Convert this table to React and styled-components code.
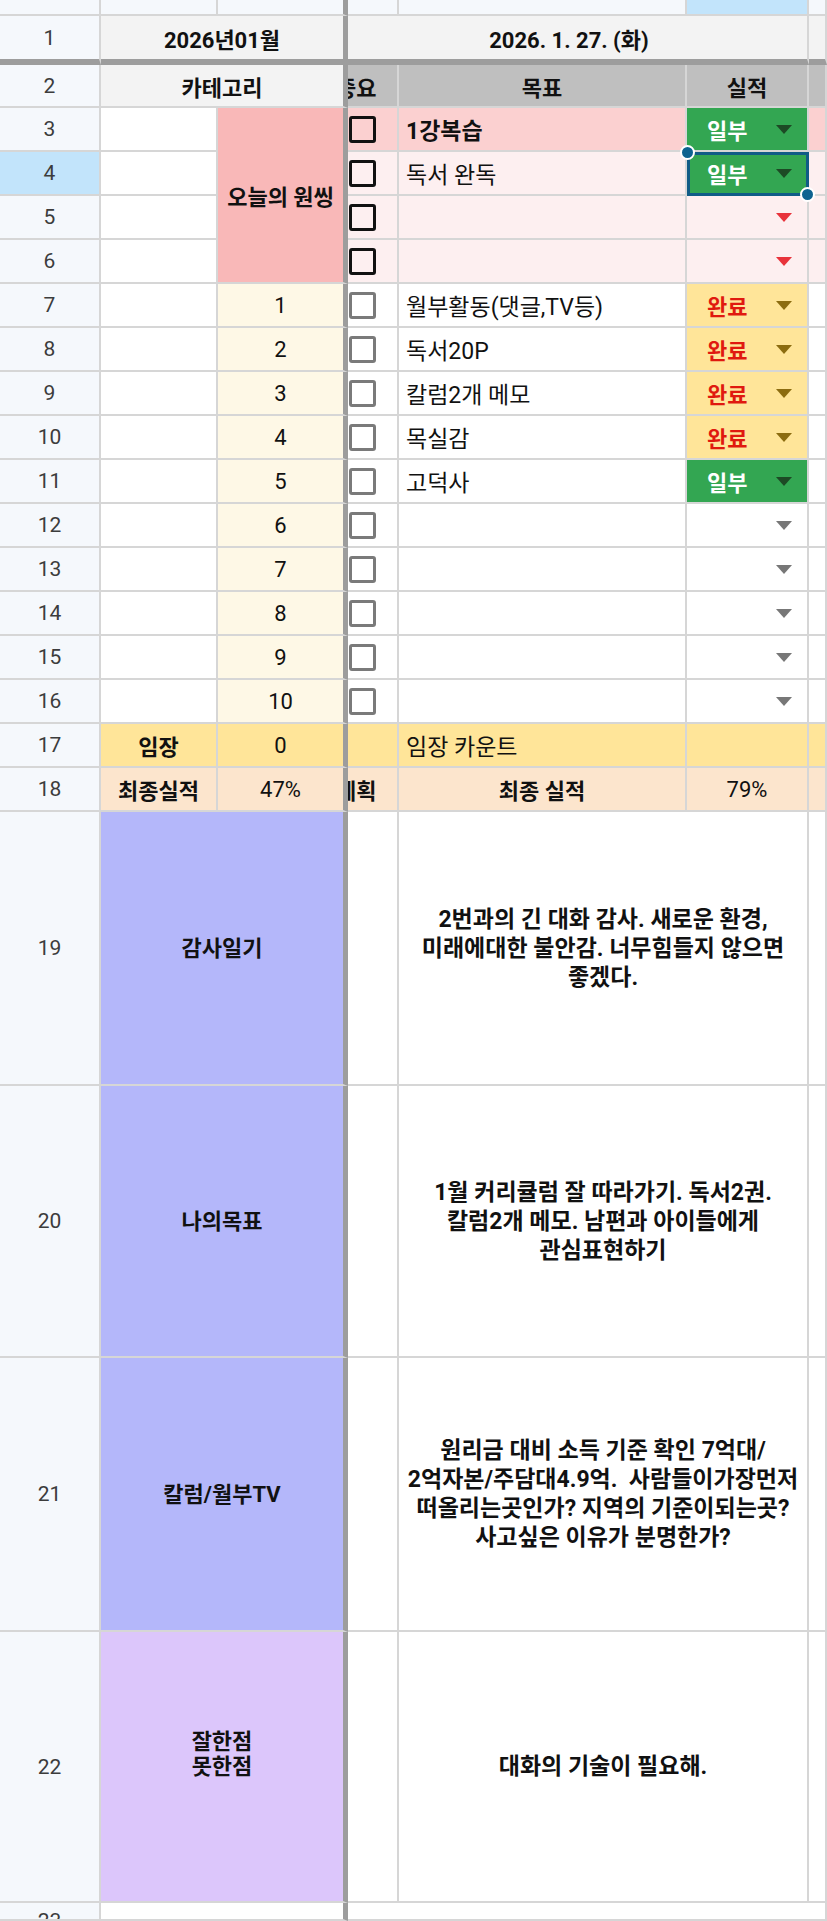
import styled, { createGlobalStyle } from 'styled-components';

const GlobalStyle = createGlobalStyle`
  body {
    margin: 0;
    background: #fff;
  }
  * {
    box-sizing: border-box;
  }
`;

//colors used by the sheet
const LINE = '#d6d6d6';
const FREEZE = '#9d9d9d';
const HEAD = '#f5f8fc';
const HEAD_SEL = '#c2e4fb';
const GRAY = '#f3f3f3';
const GRAY_DARK = '#bfbfbf';
const PINK = '#fbd0d0';
const PINK_LIGHT = '#fdeff0';
const ONE_THING = '#f9b8b8';
const CREAM = '#fef8e6';
const YELLOW = '#ffe599';
const PEACH = '#fce5cd';
const BLUE = '#b4b7fa';
const PURPLE = '#dcc6fb';
const GREEN = '#33a652';

//whole sheet grid (A..G columns, header row + rows 1..23)
const Sheet = styled.div`
  display: grid;
  grid-template-columns: 101px 117px 130px 51px 288px 122px 18px;
  grid-template-rows: 16px 49px 43px repeat(16, 44px) 274px 272px 274px 271px 18px;
  width: 827px;
  height: 1921px;
  overflow: hidden;
  font-family: Roboto, "Noto Sans CJK KR", sans-serif;
  font-size: 22px;
  color: #111;
`;

const Cell = styled.div`
  grid-column: ${(p) => p.$c};
  grid-row: ${(p) => p.$r};
  display: flex;
  align-items: center;
  justify-content: ${(p) => p.$align || 'flex-start'};
  padding: 0 7px;
  min-width: 0;
  background: ${(p) => p.$bg || '#fff'};
  border-right: ${(p) => (p.$fr ? `5px solid ${FREEZE}` : `2px solid ${LINE}`)};
  border-bottom: ${(p) => (p.$fb ? `6px solid ${FREEZE}` : `2px solid ${LINE}`)};
  font-weight: ${(p) => (p.$bold ? 700 : 400)};
  white-space: nowrap;
  overflow: hidden;
`;

//goal text in column E
const GoalCell = styled(Cell)`
  font-size: 23px;
`;

const RowHead = styled(Cell)`
  justify-content: center;
  color: #3c3c3c;
  font-size: 21px;
  background: ${(p) => (p.$sel ? HEAD_SEL : HEAD)};
`;

//row 23 is cut by the bottom edge
const CutHead = styled(RowHead)`
  align-items: flex-start;
  padding-top: 6px;
`;

//text that is partly hidden under the frozen columns
const Clipped = styled.span`
  margin-left: -12px;
`;

const CheckCell = styled(Cell)`
  padding: 0 0 0 1px;
`;

const Check = styled.span`
  flex: none;
  width: 27px;
  height: 27px;
  border: 3.5px solid ${(p) => (p.$dark ? '#111' : '#7a7a7a')};
  border-radius: 3px;
`;

const StatusCell = styled(Cell)`
  position: relative;
  justify-content: ${(p) => (p.$empty ? 'flex-end' : 'space-between')};
  padding: 0 15px 0 20px;
  font-weight: 700;
  color: ${(p) => p.$color || '#111'};
  overflow: ${(p) => (p.$sel ? 'visible' : 'hidden')};
  z-index: ${(p) => (p.$sel ? 2 : 'auto')};
  outline: ${(p) => (p.$sel ? '3px solid #105c86' : 'none')};
  outline-offset: -3px;
`;

const Arrow = styled.span`
  width: 0;
  height: 0;
  border-left: 8px solid transparent;
  border-right: 8px solid transparent;
  border-top: 9px solid ${(p) => p.$color};
`;

const Handle = styled.span`
  position: absolute;
  width: 15px;
  height: 15px;
  border-radius: 50%;
  background: #0d6290;
  border: 2px solid #fff;
  ${(p) => (p.$end ? 'right: -8px; bottom: -8px;' : 'left: -7px; top: -7px;')}
`;

const NoteCell = styled(Cell)`
  justify-content: center;
  text-align: center;
  font-size: ${(p) => p.$fs || 23}px;
  line-height: ${(p) => p.$lh || 29}px;
  font-weight: 700;
  padding: 0;
  white-space: pre;
`;

const goals = [
  { n: 3, text: '1강복습', bold: true, bg: PINK, dark: true, status: '일부' },
  { n: 4, text: '독서 완독', bg: PINK_LIGHT, dark: true, status: '일부', sel: true },
  { n: 5, text: '', bg: PINK_LIGHT, dark: true },
  { n: 6, text: '', bg: PINK_LIGHT, dark: true },
  { n: 7, text: '월부활동(댓글,TV등)', status: '완료', num: 1 },
  { n: 8, text: '독서20P', status: '완료', num: 2 },
  { n: 9, text: '칼럼2개 메모', status: '완료', num: 3 },
  { n: 10, text: '목실감', status: '완료', num: 4 },
  { n: 11, text: '고덕사', status: '일부', num: 5 },
  { n: 12, text: '', num: 6 },
  { n: 13, text: '', num: 7 },
  { n: 14, text: '', num: 8 },
  { n: 15, text: '', num: 9 },
  { n: 16, text: '', num: 10 },
];

const notes = [
  { n: 19, label: ['감사일기'], bg: BLUE, lines: ['2번과의 긴 대화 감사. 새로운 환경,', '미래에대한 불안감. 너무힘들지 않으면', '좋겠다.'] },
  { n: 20, label: ['나의목표'], bg: BLUE, lines: ['1월 커리큘럼 잘 따라가기. 독서2권.', '칼럼2개 메모. 남편과 아이들에게', '관심표현하기'] },
  { n: 21, label: ['칼럼/월부TV'], bg: BLUE, lines: ['원리금 대비 소득 기준 확인 7억대/', '2억자본/주담대4.9억.  사람들이가장먼저', '떠올리는곳인가? 지역의 기준이되는곳?', '사고싶은 이유가 분명한가?'] },
  { n: 22, label: ['잘한점', '못한점', ' '], bg: PURPLE, lines: ['대화의 기술이 필요해.'] },
];

//sheet row number -> grid row (grid row 1 is the column header strip)
const gr = (n) => String(n + 1);

const withBreaks = (lines) =>
  lines.map((l, i) => (
    <span key={i}>
      {l}
      {i < lines.length - 1 && <br />}
    </span>
  ));

const Status = ({ g, r }) => {
  const pinkRow = g.bg === PINK || g.bg === PINK_LIGHT;
  if (g.status === '일부') {
    return (
      <StatusCell $c="6" $r={r} $bg={GREEN} $color="#fff" $sel={g.sel}>
        일부
        <Arrow $color="#1d4a25" />
        {g.sel && <Handle />}
        {g.sel && <Handle $end />}
      </StatusCell>
    );
  }
  if (g.status === '완료') {
    return (
      <StatusCell $c="6" $r={r} $bg={YELLOW} $color="#e0190f">
        완료
        <Arrow $color="#8c6c10" />
      </StatusCell>
    );
  }
  return (
    <StatusCell $c="6" $r={r} $bg={g.bg} $empty>
      <Arrow $color={pinkRow ? '#e8333b' : '#777'} />
    </StatusCell>
  );
};

const App = () => {
  return (
    <>
      <GlobalStyle />
      <Sheet>
        {/* column header strip */}
        <RowHead $c="1" $r="1" />
        <Cell $c="2" $r="1" $bg={HEAD} />
        <Cell $c="3" $r="1" $bg={HEAD} $fr />
        <Cell $c="4" $r="1" $bg={HEAD} />
        <Cell $c="5" $r="1" $bg={HEAD} />
        <Cell $c="6" $r="1" $bg={HEAD_SEL} />
        <Cell $c="7" $r="1" $bg={HEAD} />

        {/* row 1 */}
        <RowHead $c="1" $r={gr(1)} $fb>1</RowHead>
        <Cell $c="2 / 4" $r={gr(1)} $bg={GRAY} $fr $fb $bold $align="center">2026년01월</Cell>
        <Cell $c="4 / 7" $r={gr(1)} $bg={GRAY} $fb $bold $align="center" style={{ paddingRight: 24 }}>
          2026. 1. 27. (화)
        </Cell>
        <Cell $c="7" $r={gr(1)} $bg={GRAY} $fb />

        {/* row 2 */}
        <RowHead $c="1" $r={gr(2)}>2</RowHead>
        <Cell $c="2 / 4" $r={gr(2)} $bg={GRAY} $fr $bold $align="center">카테고리</Cell>
        <Cell $c="4" $r={gr(2)} $bg={GRAY_DARK} $bold style={{ padding: 0 }}>
          <Clipped>중요</Clipped>
        </Cell>
        <Cell $c="5" $r={gr(2)} $bg={GRAY_DARK} $bold $align="center">목표</Cell>
        <Cell $c="6" $r={gr(2)} $bg={GRAY_DARK} $bold $align="center">실적</Cell>
        <Cell $c="7" $r={gr(2)} $bg={GRAY_DARK} />

        {/* rows 3..16 */}
        {goals.map((g) => {
          const r = gr(g.n);
          return [
            <RowHead key={`h${g.n}`} $c="1" $r={r} $sel={g.sel}>{g.n}</RowHead>,
            <Cell key={`b${g.n}`} $c="2" $r={r} />,
            g.num && (
              <Cell key={`c${g.n}`} $c="3" $r={r} $bg={CREAM} $fr $align="center">{g.num}</Cell>
            ),
            <CheckCell key={`d${g.n}`} $c="4" $r={r} $bg={g.bg}>
              <Check $dark={g.dark} />
            </CheckCell>,
            <GoalCell key={`e${g.n}`} $c="5" $r={r} $bg={g.bg} $bold={g.bold}>{g.text}</GoalCell>,
            <Status key={`f${g.n}`} g={g} r={r} />,
            <Cell key={`g${g.n}`} $c="7" $r={r} $bg={g.bg} />,
          ];
        })}
        <Cell $c="3" $r={`${gr(3)} / ${gr(7)}`} $bg={ONE_THING} $fr $bold $align="center">오늘의 원씽</Cell>

        {/* row 17 */}
        <RowHead $c="1" $r={gr(17)}>17</RowHead>
        <Cell $c="2" $r={gr(17)} $bg={YELLOW} $bold $align="center">임장</Cell>
        <Cell $c="3" $r={gr(17)} $bg={YELLOW} $fr $align="center">0</Cell>
        <Cell $c="4" $r={gr(17)} $bg={YELLOW} />
        <GoalCell $c="5" $r={gr(17)} $bg={YELLOW}>임장 카운트</GoalCell>
        <Cell $c="6" $r={gr(17)} $bg={YELLOW} />
        <Cell $c="7" $r={gr(17)} $bg={YELLOW} />

        {/* row 18 */}
        <RowHead $c="1" $r={gr(18)}>18</RowHead>
        <Cell $c="2" $r={gr(18)} $bg={PEACH} $bold $align="center">최종실적</Cell>
        <Cell $c="3" $r={gr(18)} $bg={PEACH} $fr $align="center">47%</Cell>
        <Cell $c="4" $r={gr(18)} $bg={PEACH} $bold style={{ padding: 0 }}>
          <Clipped>계획</Clipped>
        </Cell>
        <Cell $c="5" $r={gr(18)} $bg={PEACH} $bold $align="center">최종 실적</Cell>
        <Cell $c="6" $r={gr(18)} $bg={PEACH} $align="center">79%</Cell>
        <Cell $c="7" $r={gr(18)} $bg={PEACH} />

        {/* rows 19..22 */}
        {notes.map((n) => {
          const r = gr(n.n);
          return [
            <RowHead key={`h${n.n}`} $c="1" $r={r}>{n.n}</RowHead>,
            <NoteCell key={`l${n.n}`} $c="2 / 4" $r={r} $bg={n.bg} $fr $fs={22} $lh={25}>
              <div>{withBreaks(n.label)}</div>
            </NoteCell>,
            <Cell key={`d${n.n}`} $c="4" $r={r} />,
            <NoteCell key={`t${n.n}`} $c="5 / 7" $r={r}>
              <div>{withBreaks(n.lines)}</div>
            </NoteCell>,
            <Cell key={`g${n.n}`} $c="7" $r={r} />,
          ];
        })}

        {/* row 23, cut off */}
        <CutHead $c="1" $r={gr(23)}>23</CutHead>
        <Cell $c="2 / 4" $r={gr(23)} $fr />
        <Cell $c="4 / 8" $r={gr(23)} />
      </Sheet>
    </>
  );
};

export default App;
